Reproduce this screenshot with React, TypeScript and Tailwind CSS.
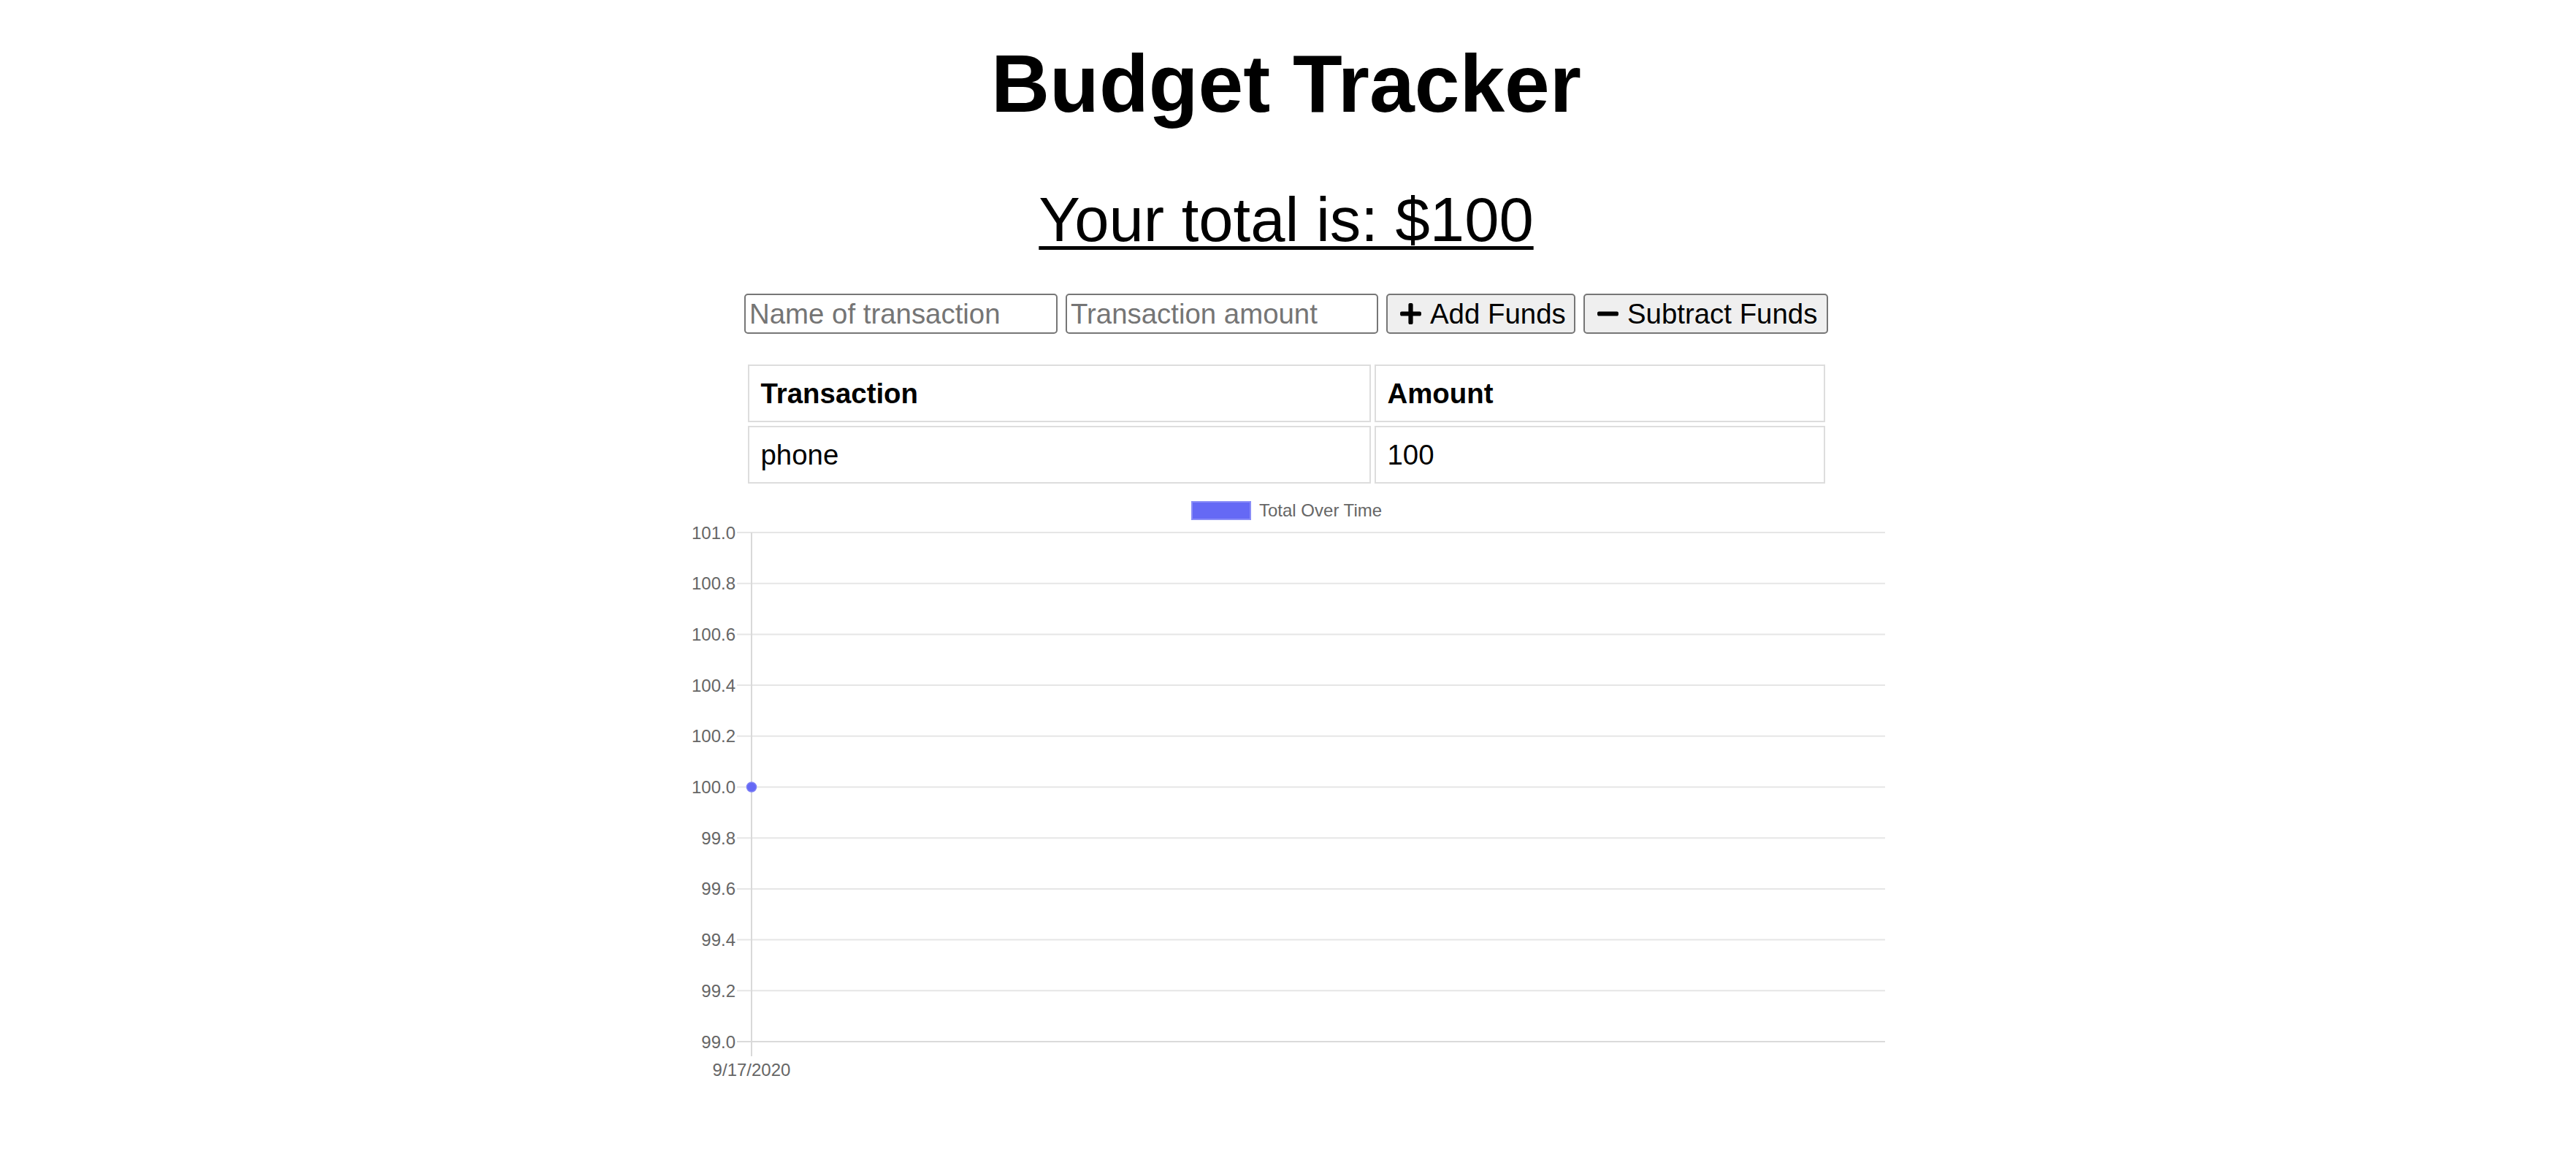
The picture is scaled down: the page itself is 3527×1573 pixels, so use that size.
import { FaMinus, FaPlus } from "react-icons/fa";

const yTicks = ["101.0", "100.8", "100.6", "100.4", "100.2", "100.0", "99.8", "99.6", "99.4", "99.2", "99.0"];

function TotalChart() {
  const top = 62;
  const step = 69.7;
  const axisX = 90;
  const right = 1642;
  const pointY = top + step * 5;

  return (
    <svg width={1650} height={840} viewBox="0 0 1650 840" className="block ml-[5px]">
      <rect x={693} y={20} width={80} height={24} fill="#6569f5" stroke="#8a8df7" strokeWidth={2} />
      <text x={785} y={40} fontSize={24} fill="#666" fontFamily="'Liberation Sans', Arial, sans-serif">
        Total Over Time
      </text>
      {yTicks.map((label, i) => {
        const y = top + step * i;
        return (
          <g key={label}>
            <line x1={70} x2={right} y1={y} y2={y} stroke={i === 10 ? "#dadada" : "#e6e6e6"} strokeWidth={2} />
            <text
              x={68}
              y={y + 8.5}
              fontSize={24}
              fill="#666"
              textAnchor="end"
              fontFamily="'Liberation Sans', Arial, sans-serif"
            >
              {label}
            </text>
          </g>
        );
      })}
      <line x1={axisX} x2={axisX} y1={top} y2={top + step * 10 + 20} stroke="#d9d9d9" strokeWidth={2} />
      <text
        x={axisX}
        y={806}
        fontSize={24}
        fill="#666"
        textAnchor="middle"
        fontFamily="'Liberation Sans', Arial, sans-serif"
      >
        9/17/2020
      </text>
      <circle cx={axisX} cy={pointY} r={6.5} fill="#6569f5" stroke="#7b7ef6" strokeWidth={1.5} />
    </svg>
  );
}

export default function App() {
  return (
    <div className="min-h-[1573px] pr-[5px] bg-white text-black flex flex-col items-center font-['Liberation_Sans',Arial,sans-serif]">
      <h1 className="mt-[59px] text-[111px] leading-[112px] font-bold">Budget Tracker</h1>
      <h2 className="mt-[87px] text-[85px] leading-[86px] underline decoration-[5px] underline-offset-[7px]">
        Your total is: $100
      </h2>

      <div className="mt-[58px] flex gap-[11px] h-[55px]">
        <input
          type="text"
          placeholder="Name of transaction"
          className="w-[429px] h-[55px] border-2 border-[#767676] rounded-[5px] px-[5px] text-[38.4px] placeholder:text-[#757575] outline-none"
        />
        <input
          type="number"
          placeholder="Transaction amount"
          className="w-[428px] h-[55px] border-2 border-[#767676] rounded-[5px] px-[5px] text-[38.4px] placeholder:text-[#757575] outline-none"
        />
        <button className="w-[259px] h-[55px] flex items-center gap-[10px] whitespace-nowrap bg-[#efefef] border-2 border-[#767676] rounded-[5px] px-[15px] text-[38.4px]">
          <FaPlus size={33} className="shrink-0" />
          Add Funds
        </button>
        <button className="w-[335px] h-[55px] flex items-center gap-[10px] whitespace-nowrap bg-[#efefef] border-2 border-[#767676] rounded-[5px] px-[15px] text-[38.4px]">
          <FaMinus size={33} className="shrink-0" />
          Subtract Funds
        </button>
      </div>

      <table className="mt-[37px] border-separate border-spacing-[5px] text-[38.4px] leading-[45px]">
        <thead>
          <tr>
            <th className="w-[853px] border-2 border-[#dddddd] px-[16px] py-[15px] text-left font-bold">Transaction</th>
            <th className="w-[617px] border-2 border-[#dddddd] px-[16px] py-[15px] text-left font-bold">Amount</th>
          </tr>
        </thead>
        <tbody>
          <tr>
            <td className="border-2 border-[#dddddd] px-[16px] py-[15px]">phone</td>
            <td className="border-2 border-[#dddddd] px-[16px] py-[15px]">100</td>
          </tr>
        </tbody>
      </table>

      <TotalChart />
    </div>
  );
}
